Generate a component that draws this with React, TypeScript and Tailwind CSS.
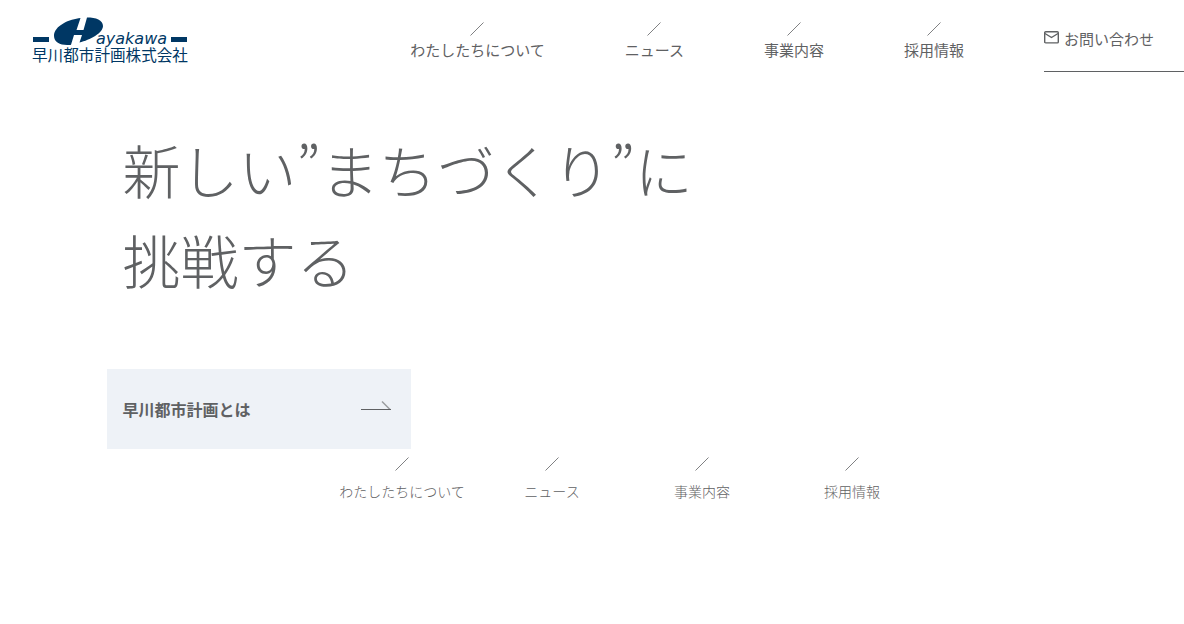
const links = [
  { label: 'わたしたちについて', href: '#about' },
  { label: 'ニュース', href: '#news' },
  { label: '事業内容', href: '#business' },
  { label: '採用情報', href: '#recruit' },
];

function Slash() {
  return (
    <svg width="14" height="14" viewBox="0 0 14 14" fill="none" aria-hidden="true">
      <path d="M0.5 13.5L13.5 0.5" stroke="#5f6163" strokeWidth="0.8" />
    </svg>
  );
}

function Logo() {
  return (
    <svg className="block h-[48px] w-[156px]" viewBox="0 0 156 48" role="img" aria-label="早川都市計画株式会社" fill="#003764">
      <rect x="1" y="21" width="16" height="5" />
      <rect x="139" y="21" width="16" height="5" />
      <path d="M48.500 2C38 3 22 9.500 22 20C22 26 28 29 35 29C37 29 38.500 29 39 28.700L42 19H50L47.500 26.500C58 24 71 17 71 10C71 4 64 1.500 55 1.500L51.500 14H44.500Z" />
      <text x="64" y="28" fontSize="16" fontStyle="italic" fontFamily="'DejaVu Sans', sans-serif">ayakawa</text>
      <g transform="scale(0.975)">
        <text x="0" y="46" fontSize="16" fontFamily="'Noto Sans CJK JP', sans-serif">早川都市計画株式会社</text>
      </g>
    </svg>
  );
}

export default function App() {
  return (
    <div lang="ja" className="bg-white font-['Noto_Sans_CJK_JP',sans-serif] text-[#5f6163]">
      <header className="flex items-start pl-8">
        <a href="#top" className="mt-4">
          <Logo />
        </a>
        <nav aria-label="メイン" className="mt-[22px] ml-auto">
          <ul className="flex gap-20">
            {links.map((l) => (
              <li key={l.href}>
                <a href={l.href} className="flex flex-col items-center text-[15px] leading-7">
                  <Slash />
                  {l.label}
                </a>
              </li>
            ))}
          </ul>
        </nav>
        <a
          href="#contact"
          className="ml-20 flex h-[72px] w-[140px] gap-[5px] border-b border-[#5f6163] pt-6 text-[15px] leading-[30px]"
        >
          <svg className="mt-[7px]" width="15" height="13" viewBox="0 0 15 13" fill="none" stroke="#5f6163" strokeWidth="1.400" aria-hidden="true">
            <rect x="0.700" y="0.700" width="13.600" height="11.200" rx="1" />
            <path d="M1 2.500L7.500 6.500L14 2.500" />
          </svg>
          お問い合わせ
        </a>
      </header>

      <main className="px-[9%] pt-[52px]">
        <h1 className="pl-4 text-[58px] leading-[90px] font-light">
          新しい”まちづくり”に
          <br />
          挑戦する
        </h1>
        <a
          href="#company"
          className="mt-[65px] flex h-20 w-[304px] items-center justify-between bg-[#eef2f7] pr-5 pl-4 text-base font-bold"
        >
          早川都市計画とは
          <svg width="30" height="16" viewBox="0 0 30 16" fill="none" stroke="#5f6163" aria-hidden="true">
            <path d="M0 8.500H30" />
            <path d="M21 0.500L29 8.500" strokeWidth="1.400" strokeOpacity="0.600" />
          </svg>
        </a>
      </main>

      <footer className="flex justify-center pt-2 pl-[70px]">
        <nav aria-label="フッター">
          <ul className="flex">
            {links.map((l) => (
              <li key={l.href} className="w-[150px]">
                <a href={l.href} className="flex flex-col items-center gap-2 text-sm leading-6 font-light">
                  <Slash />
                  {l.label}
                </a>
              </li>
            ))}
          </ul>
        </nav>
      </footer>
    </div>
  );
}
